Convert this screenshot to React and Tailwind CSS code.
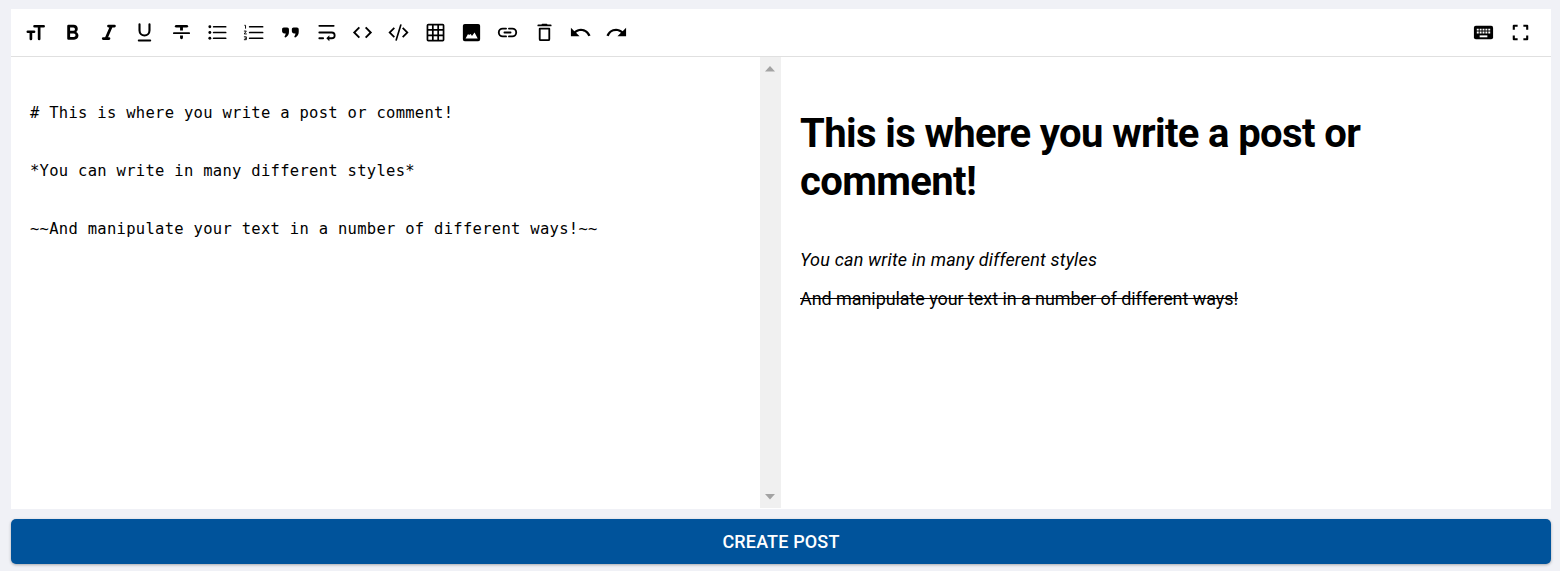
import React from "react";
import { MdUndo, MdRedo, MdCode } from "react-icons/md";

const source = [
  "# This is where you write a post or comment!",
  "",
  "*You can write in many different styles*",
  "",
  "~~And manipulate your text in a number of different ways!~~",
];

function Icon({ children }) {
  return (
    <svg viewBox="0 0 24 24" className="size-[23px]" fill="currentColor" stroke="none" strokeWidth="2" strokeLinecap="round" strokeLinejoin="round">
      {children}
    </svg>
  );
}

function Line({ d, w = 2, cap = "round" }) {
  return <path d={d} fill="none" stroke="currentColor" strokeWidth={w} strokeLinecap={cap} />;
}

const leftTools = [
  { name: "Header", icon: <Icon><Line d="M11 5.500H20.500M15.800 5.500v13.200M4 11.200h6.500M7.200 11.200v7.500" w={2.800} /></Icon> },
  { name: "Bold", icon: <Icon><path fillRule="evenodd" d="M7.8 4h5.4c2.5 0 4.3 1.7 4.3 4 0 1.500-.7 2.700-1.800 3.400 1.500.7 2.500 2.100 2.500 3.800 0 2.500-1.900 4.300-4.500 4.300H7.800A1.300 1.300 0 0 1 6.500 18.200V5.300A1.300 1.300 0 0 1 7.800 4zM9.500 6.700v3.600h3.300a1.800 1.800 0 0 0 0-3.600zM9.500 13v3.800h3.800a1.900 1.900 0 0 0 0-3.800z" /></Icon> },
  { name: "Italic", icon: <Icon><Line d="M12 5.300h6.200M6.500 18.300h6M15 5.500L9.600 18" w={2.900} /></Icon> },
  { name: "Underline", icon: <Icon><Line d="M6.800 3.500V10a5.200 5.200 0 0 0 10.400 0V3.500" w={2.200} /><Line d="M6 20.300h12" /></Icon> },
  { name: "Strikethrough", icon: <Icon><Line d="M6.500 5.500h11" w={2.800} /><path d="M10.500 5h3v5h-3zM10.500 15h3v2.500a1.500 1.500 0 0 1-3 0z" /><Line d="M4 12.700h16" w={1.800} /></Icon> },
  { name: "Bulleted list", icon: <Icon><Line d="M8 6h12.500M8 12h12.500M8 18h12.500" w={1.800} /><circle cx="4" cy="6" r="1.500" /><circle cx="4" cy="12" r="1.500" /><circle cx="4" cy="18" r="1.500" /></Icon> },
  { name: "Numbered list", icon: <Icon><Line d="M8 6h13.500M8 12h13.500M8 18h13.500" w={1.800} /><Line cap="butt" w={1} d="M2.500 4.500h1.200V8M2 10.500h2.500L2.300 13.500H5M2 16.500h2.500v3H2M2.800 18h1.700" /></Icon> },
  { name: "Quote", icon: <Icon><path d="M5 6.800h3.500c1.200 0 1.900.8 1.900 2v2.700c0 2.700-1.300 4.700-3.600 5.700-.6.200-1.200-.3-1-.9.700-1.200 1.100-2.200 1.200-3.300H5.500c-1.300 0-2.300-.9-2.300-2.200V8.600c0-1 .8-1.800 1.800-1.800zM15.200 6.800h3.500c1.200 0 1.900.8 1.900 2v2.700c0 2.700-1.300 4.700-3.600 5.700-.6.200-1.200-.3-1-.9.700-1.200 1.100-2.200 1.200-3.300h-1.500c-1.300 0-2.300-.9-2.300-2.200V8.600c0-1 .8-1.800 1.800-1.800z" /></Icon> },
  { name: "Wrap", icon: <Icon><Line d="M4.500 5h15M4.500 12h13a3 3 0 0 1 0 6h-3M4.500 18h4" w={1.900} /><path d="M15 14.800v6.400L11.800 18z" /></Icon> },
  { name: "Inline code", icon: <MdCode size={23} /> },
  { name: "Code block", icon: <Icon><path d="M7 6.500l1.300 1.300L4.100 12l4.200 4.200L7 17.500 1.500 12zM17 6.500l-1.300 1.300 4.200 4.200-4.200 4.200 1.300 1.300 5.500-5.500z" /><Line d="M14.400 4.200L9.600 19.800" w={1.700} /></Icon> },
  { name: "Table", icon: <Icon><path fill="none" stroke="currentColor" strokeWidth="1.800" d="M4.500 3.700h15q.9 0 .9.900v15q0 .9-.9.900h-15q-.9 0-.9-.9v-15q0-.9.900-.9zM9.200 3.700v16.800M14.800 3.700v16.800M3.600 9.300h16.800M3.600 14.900h16.800" /></Icon> },
  { name: "Image", icon: <Icon><path fillRule="evenodd" d="M5 3h14q2 0 2 2v14q0 2-2 2H5q-2 0-2-2V5q0-2 2-2zM5.800 18.200h12.700l-3.300-6.300-2.700 3.700-1.300-2-1.800 1-1-1.100z" /></Icon> },
  { name: "Link", icon: <Icon><Line d="M10.500 7.900H7a4.100 4.100 0 0 0 0 8.200h3.500M13.500 7.900H17a4.100 4.100 0 0 1 0 8.200h-3.500M8.800 12h6.400" w={1.900} /></Icon> },
  { name: "Clear", icon: <Icon><Line d="M5.500 4.600h13M9.800 3.800h4.400" w={1.800} /><path fill="none" stroke="currentColor" strokeWidth="1.900" d="M7 8h10v11q0 1-1 1H8q-1 0-1-1z" /></Icon> },
  { name: "Undo", icon: <MdUndo size={23} /> },
  { name: "Redo", icon: <MdRedo size={23} /> },
];

const rightTools = [
  { name: "Keyboard", icon: <Icon><path d="M4 5h16q2 0 2 2v10q0 2-2 2H4q-2 0-2-2V7q0-2 2-2z" /><path fill="none" stroke="white" strokeLinecap="butt" strokeWidth="2" strokeDasharray="2 1" d="M5 9h14M5 12h14" /><path fill="none" stroke="white" strokeLinecap="butt" strokeWidth="2" d="M8 16h8" /></Icon> },
  { name: "Full screen", icon: <Icon><path fill="none" stroke="currentColor" strokeLinecap="butt" strokeWidth="2.200" d="M5 9V5h4M15 5H19v4M19 15V19h-4M9 19H5v-4" /></Icon> },
];

function Tools({ items }) {
  return (
    <div className="flex">
      {items.map((t) => (
        <button key={t.name} aria-label={t.name} className="flex w-[36.3px] justify-center">
          {t.icon}
        </button>
      ))}
    </div>
  );
}

function Arrow({ down }) {
  return (
    <svg viewBox="0 0 10 6" className="h-[6px] w-[10px]" fill="#a3a3a3">
      <path d={down ? "M0 0h10L5 5.500z" : "M0 5.500h10L5 0z"} />
    </svg>
  );
}

export default function App() {
  return (
    <div className="flex h-[571px] flex-col bg-[#f0f1f6] pt-[9px] pr-[9px] pl-[11px] font-['Roboto',sans-serif] text-black">
      <div className="flex h-[500px] flex-col bg-white">
        <div className="flex h-12 shrink-0 items-center justify-between border-b border-[#e0e0e0] pr-[12.7px] pl-[6.8px]">
          <Tools items={leftTools} />
          <Tools items={rightTools} />
        </div>
        <div className="flex flex-1">
          <div className="w-[749px] pt-[42px] pl-[19px] font-['DejaVu_Sans_Mono',monospace] text-[15.5px] leading-[29px] tracking-[0.29px] whitespace-pre">
            {source.map((line, i) => (
              <div key={i} className="h-[29px]">{line}</div>
            ))}
          </div>
          <div className="mb-px flex w-[21px] flex-col items-center justify-between bg-[#f0f0f0] pt-[9px] pr-px pb-[8px]">
            <Arrow />
            <Arrow down />
          </div>
          <div className="flex-1 pt-[53px] pr-5 pl-[19px] text-lg leading-[27px]">
            <h1 className="w-[640px] text-[40px] leading-[48px] font-bold tracking-[-0.62px]">This is where you write a post or comment!</h1>
            <p className="mt-10 tracking-[0.18px] italic">You can write in many different styles</p>
            <p className="mt-3 tracking-[-0.07px] line-through">And manipulate your text in a number of different ways!</p>
          </div>
        </div>
      </div>
      <button className="mt-[10px] h-[45px] rounded-[5px] bg-[#00539b] text-lg font-medium tracking-[0.15px] text-white shadow-[0_1px_3px_rgba(0,0,0,0.3)]">
        CREATE POST
      </button>
    </div>
  );
}
